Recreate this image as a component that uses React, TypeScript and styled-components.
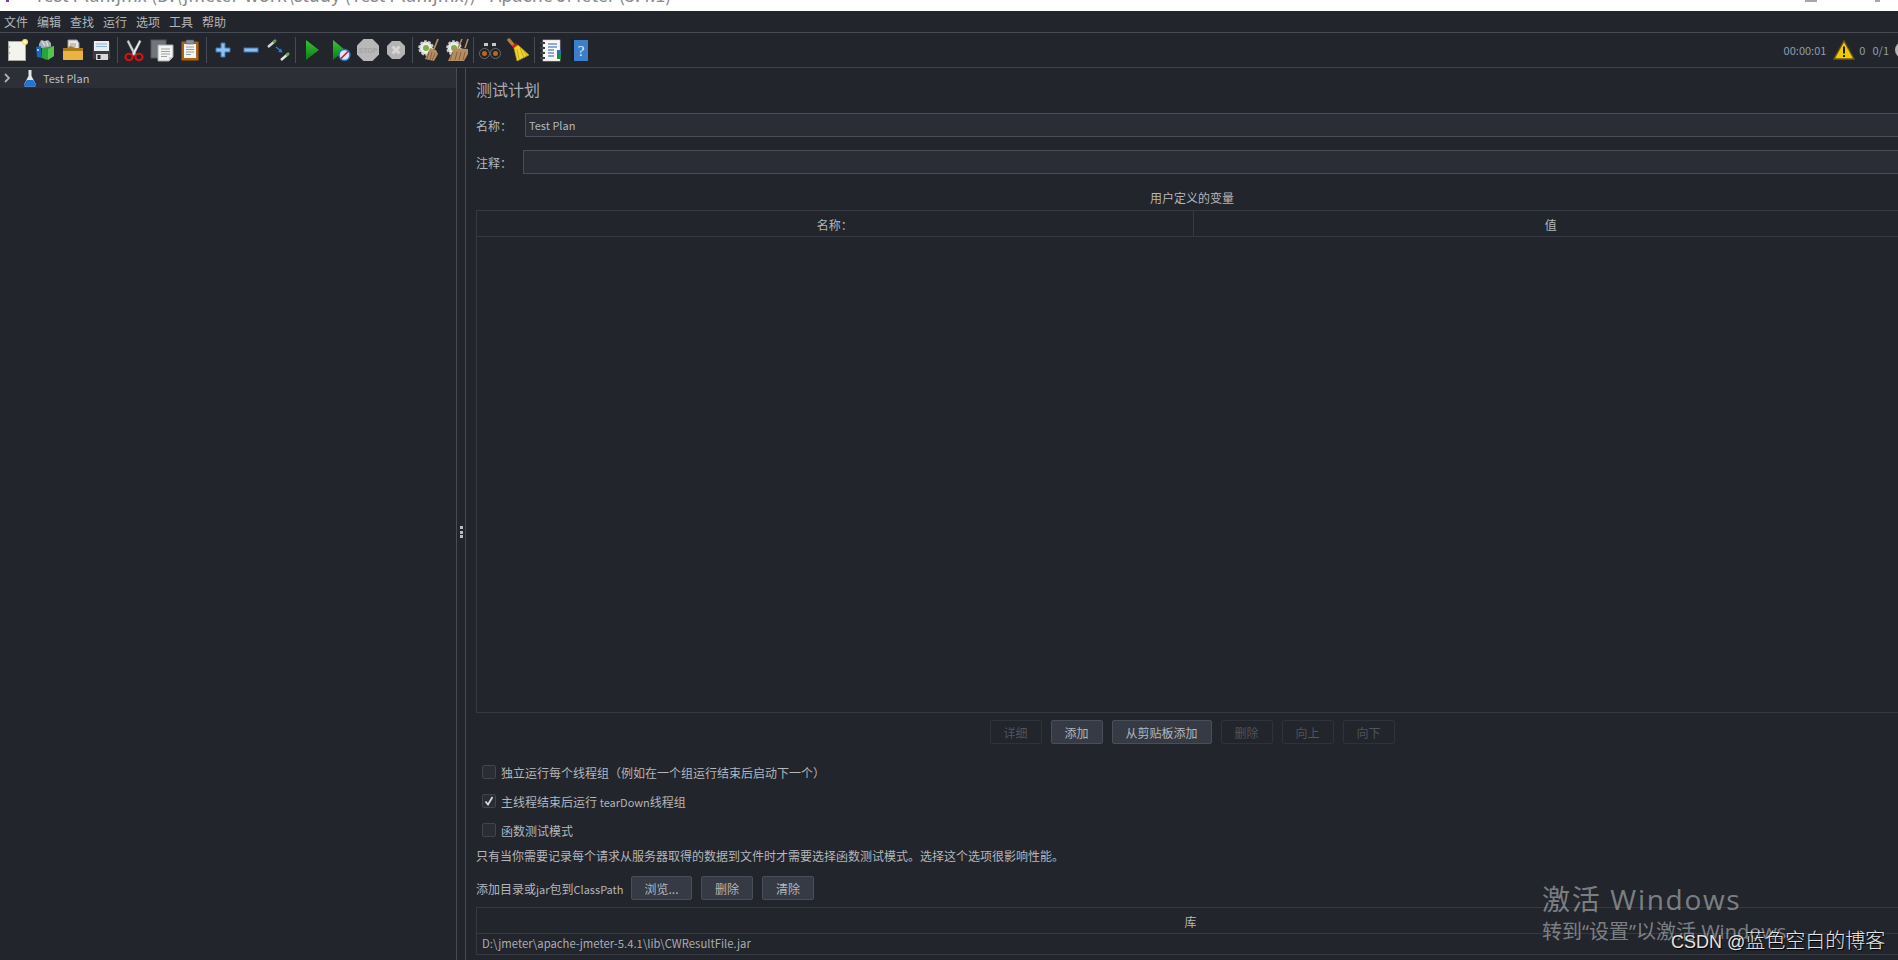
import React from "react";
import styled, { createGlobalStyle } from "styled-components";

const GlobalStyle = createGlobalStyle`
  html, body {
    margin: 0;
    padding: 0;
    background: #22252c;
  }
  * {
    box-sizing: border-box;
  }
`;

const Window = styled.div`
  width: 1898px;
  height: 960px;
  position: relative;
  overflow: hidden;
  display: flex;
  flex-direction: column;
  background: #22252c;
  color: #b3b6bb;
  font: 12px "Noto Sans CJK SC", "Noto Sans", sans-serif;
`;

const Latin = styled.span`
  font-size: 11px;
`;

const TitleBar = styled.div`
  flex: none;
  height: 11px;
  overflow: hidden;
  background: #fff;
  display: flex;
  align-items: flex-start;
  padding-left: 6px;
`;

const TitleMark = styled.span`
  width: 3px;
  height: 2px;
  background: #7a3fa0;
  margin-right: 25px;
`;

const TitleText = styled.span`
  margin-top: -17px;
  font-size: 18.15px;
  line-height: 22px;
  color: #8a8a8a;
  white-space: nowrap;
`;

const TitleControls = styled.div`
  margin-left: auto;
  display: flex;
  align-items: flex-start;
  gap: 58px;
  padding-right: 18px;
`;

const ControlMark = styled.span<{ $w: number }>`
  width: ${p => p.$w}px;
  height: 2px;
  background: #a8a8a8;
`;

const MenuBar = styled.div`
  flex: none;
  height: 22px;
  display: flex;
  align-items: center;
  gap: 9px;
  padding: 0 0 1px 4px;
  border-bottom: 1px solid #484b53;
`;

const Toolbar = styled.div`
  flex: none;
  height: 35px;
  display: flex;
  align-items: center;
  padding-left: 3px;
  border-bottom: 1px solid #3f424a;
`;

const ToolButton = styled.div`
  flex: none;
  width: 28px;
  height: 28px;
  display: flex;
  align-items: center;
  justify-content: center;
  svg {
    display: block;
  }
`;

const ToolSeparator = styled.div`
  flex: none;
  width: 5px;
  height: 26px;
  display: flex;
  justify-content: center;
  &::before {
    content: "";
    width: 1px;
    background: #484b53;
  }
`;

const Status = styled.div`
  margin-left: auto;
  display: flex;
  align-items: center;
  color: #8f9db0;
  font-size: 11px;
  margin-right: -13px;
`;

const StatusWarning = styled.span`
  display: flex;
  margin: 0 4px 0 7px;
`;

const StatusCount = styled.span`
  margin-right: 7px;
`;

const StatusCircle = styled.span`
  width: 16px;
  height: 16px;
  border-radius: 50%;
  background: #b5b5b5;
  margin-left: 6px;
`;

const Split = styled.div`
  flex: 1;
  min-height: 0;
  display: flex;
`;

const TreePanel = styled.div`
  flex: none;
  width: 457px;
  border-right: 1px solid #484b53;
`;

const TreeRow = styled.div`
  height: 20px;
  display: flex;
  align-items: center;
  padding-left: 4px;
  background: #2c2f38;
  color: #b9bcc2;
  font-size: 11px;
`;

const TreeChevron = styled.svg`
  margin-right: 13px;
`;

const TreeIcon = styled.svg`
  margin-right: 6px;
`;

const Divider = styled.div`
  flex: none;
  width: 8px;
  display: flex;
  flex-direction: column;
  align-items: center;
  justify-content: center;
  gap: 1.5px;
  padding-top: 36px;
`;

const GripDot = styled.span`
  width: 3px;
  height: 3px;
  background: #b8bcc4;
`;

const Pane = styled.div`
  flex: none;
  width: 1443px;
  padding: 11px 0 0 10px;
  border-left: 1px solid #484b53;
`;

const PaneTitle = styled.div`
  height: 20px;
  line-height: 20px;
  font-size: 16px;
  color: #a9acb2;
`;

const FieldRow = styled.div<{ $top: number }>`
  display: flex;
  align-items: center;
  height: 24px;
  margin-top: ${p => p.$top}px;
`;

const FieldLabel = styled.label<{ $width: number }>`
  flex: none;
  width: ${p => p.$width}px;
`;

const TextField = styled.input`
  flex: 1;
  height: 24px;
  padding: 0 3px;
  background: #2a2d35;
  border: 1px solid #4a4d56;
  color: #b3b6bb;
  font: inherit;
  font-size: 11px;
  outline: none;
`;

const SectionTitle = styled.div`
  height: 20px;
  line-height: 20px;
  margin-top: 14px;
  text-align: center;
`;

const TableBox = styled.div<{ $top: number; $width: number }>`
  width: ${p => p.$width}px;
  margin-top: ${p => p.$top}px;
  border: 1px solid #363942;
  border-right: none;
`;

const TableHead = styled.div<{ $columns: number }>`
  height: 26px;
  display: grid;
  grid-template-columns: repeat(${p => p.$columns}, 1fr);
  border-bottom: 1px solid #363942;
`;

const HeadCell = styled.div`
  display: flex;
  align-items: center;
  justify-content: center;
  padding-top: 1px;
  & + & {
    border-left: 1px solid #363942;
  }
`;

const TableBody = styled.div`
  height: 475px;
`;

const TableRow = styled.div`
  height: 20px;
  line-height: 19px;
  padding-left: 5px;
  font-size: 11.3px;
  color: #a9acb2;
`;

const ButtonRow = styled.div`
  display: flex;
  justify-content: center;
  gap: 9px;
  margin-top: 7px;
`;

const Button = styled.button<{ $width: number }>`
  width: ${p => p.$width}px;
  height: 24px;
  padding: 0;
  border-radius: 2px;
  border: 1px solid ${p => (p.disabled ? "#2f323a" : "#4a4e58")};
  background: ${p => (p.disabled ? "transparent" : "#363a44")};
  color: ${p => (p.disabled ? "#50545d" : "#b3b6bb")};
  font: inherit;
`;

const Options = styled.div`
  display: flex;
  flex-direction: column;
  gap: 15px;
  margin-top: 21px;
  padding-left: 6px;
`;

const Option = styled.div`
  height: 14px;
  display: flex;
  align-items: center;
  gap: 5px;
`;

const CheckBox = styled.span`
  flex: none;
  width: 14px;
  height: 14px;
  border: 1px solid #41454e;
  border-radius: 2px;
  background: #2a2d35;
  display: flex;
  align-items: center;
  justify-content: center;
`;

const Hint = styled.div`
  height: 18px;
  line-height: 18px;
  margin-top: 10px;
`;

const ClassPathRow = styled.div`
  display: flex;
  align-items: center;
  gap: 9px;
  margin-top: 11px;
`;

const ClassPathLabel = styled.span`
  width: 146px;
  white-space: nowrap;
`;

const Activation = styled.div`
  position: absolute;
  left: 1542px;
  top: 880px;
  color: rgba(255, 255, 255, 0.42);
  font-family: "Open Sans", "Noto Sans CJK SC", sans-serif;
  white-space: nowrap;
`;

const ActivationTitle = styled.div`
  font-size: 28px;
  line-height: 38px;
  letter-spacing: 1.7px;
`;

const ActivationText = styled.div`
  font-size: 20px;
  line-height: 28px;
`;

const Credit = styled.div`
  position: absolute;
  left: 1671px;
  top: 926px;
  font-family: "Liberation Sans", "Noto Sans CJK SC", sans-serif;
  font-size: 18px;
  line-height: 28px;
  color: #e4e4e4;
  text-shadow: 1px 1px 1px #000;
  white-space: nowrap;
  span {
    font-family: "Noto Sans CJK SC", sans-serif;
    font-size: 20px;
    font-weight: 300;
  }
`;

const Icon: React.FC<{ children: React.ReactNode }> = ({ children }) => (
  <svg width="24" height="24" viewBox="0 0 24 24">
    {children}
  </svg>
);

const NewIcon = () => (
  <Icon>
    <rect x="3.5" y="3.5" width="17" height="19" fill="#f4f4ee" stroke="#a9a9a2" />
    <circle cx="4.5" cy="9" r="0.8" fill="#999" />
    <circle cx="4.5" cy="15" r="0.8" fill="#999" />
    <circle cx="20" cy="4" r="3" fill="#f6e27a" />
    <circle cx="20" cy="4" r="1.4" fill="#fffbe0" />
  </Icon>
);

const TemplatesIcon = () => (
  <Icon>
    <path d="M6 6l2-4 4 1 3-1 3 3v5H6z" fill="#a9adb0" />
    <path d="M9 3l3 5M13 3l2 5" stroke="#e4e6e8" strokeWidth="1.2" />
    <path d="M3 9l5-1 1 12-5-1z" fill="#1668b8" />
    <path d="M5 11v2" stroke="#dfe9f3" strokeWidth="1.4" />
    <path d="M9 10l12-2v10l-7 4-5-2z" fill="#2aa33a" />
    <path d="M15 11l6-3v10l-6 4z" fill="#55c550" />
  </Icon>
);

const OpenIcon = () => (
  <Icon>
    <path d="M7 2h9l2 3v8H7z" fill="#e8e8e8" stroke="#999" />
    <path d="M9 6h6M9 8h6" stroke="#9a9a9a" />
    <path d="M2 10h5l2-2 6 2h7v11a1 1 0 0 1-1 1H3a1 1 0 0 1-1-1z" fill="#a97a16" />
    <path d="M2 13h20v8a1 1 0 0 1-1 1H3a1 1 0 0 1-1-1z" fill="#eab343" />
  </Icon>
);

const SaveIcon = () => (
  <Icon>
    <path d="M3 3h17l2 2v17H3z" fill="#3b3d42" stroke="#1d1e21" />
    <rect x="5" y="3" width="15" height="10" fill="#e6edf3" />
    <path d="M7 6h11M7 8.500h11" stroke="#8fb3d1" />
    <rect x="7" y="16" width="12" height="6" fill="#d8d8d8" />
    <rect x="8.500" y="17" width="3" height="4" fill="#2a2b2e" />
  </Icon>
);

const CutIcon = () => (
  <Icon>
    <path d="M6.500 2l7.500 14-2 1.500L5 3.500z" fill="#d6d8da" stroke="#8b8e92" strokeWidth="0.5" />
    <path d="M17.500 2L10 16l2 1.500L19 3.500z" fill="#f0f1f2" stroke="#8b8e92" strokeWidth="0.5" />
    <ellipse cx="7" cy="19" rx="3.600" ry="3.200" fill="none" stroke="#cf1414" strokeWidth="2.100" />
    <ellipse cx="17" cy="19" rx="3.600" ry="3.200" fill="none" stroke="#cf1414" strokeWidth="2.100" />
  </Icon>
);

const CopyIcon = () => (
  <Icon>
    <rect x="1" y="2" width="15" height="18" fill="#72757a" stroke="#55585c" />
    <path d="M8 7h15v12l-4 4H8z" fill="#f4f4f4" stroke="#a7a7a7" />
    <path d="M11 11h9M11 13.500h9M11 16h9M11 18.500h6" stroke="#a0a0a0" />
    <path d="M19 23v-4h4z" fill="#cfcfcf" />
  </Icon>
);

const PasteIcon = () => (
  <Icon>
    <rect x="3.500" y="3.500" width="17" height="19" rx="1" fill="#a8651a" stroke="#6f4310" />
    <path d="M6 6h12v14H6z" fill="#f3f3f1" />
    <rect x="8" y="2" width="8" height="4" rx="1" fill="#8c8f93" stroke="#55585c" strokeWidth="0.6" />
    <path d="M8 9h8M8 11.500h8M8 14h8M8 16.500h5" stroke="#9c9c9c" />
  </Icon>
);

const PlusIcon = () => (
  <Icon>
    <path d="M10 5h4v5h5v4h-5v5h-4v-5H5v-4h5z" fill="#8fc0ec" stroke="#3a79b6" />
  </Icon>
);

const MinusIcon = () => (
  <Icon>
    <rect x="5" y="10" width="14" height="4" fill="#8fc0ec" stroke="#3a79b6" />
  </Icon>
);

const ToggleIcon = () => (
  <Icon>
    <path d="M1 9l7-6" stroke="#d8d8d8" strokeWidth="2.400" />
    <path d="M6 4.500l3-2.500" stroke="#5f9f4a" strokeWidth="2.600" />
    <path d="M14 22l7-6" stroke="#e4e4e4" strokeWidth="2.400" />
    <path d="M19 17.500l3-2.500" stroke="#6cae50" strokeWidth="2.600" />
    <path d="M9 9l5 4" stroke="#2a7de0" strokeWidth="1.500" />
    <path d="M15.500 14.500l-4.500-.5 3-3.500z" fill="#2a7de0" />
  </Icon>
);

const StartIcon = () => (
  <Icon>
    <defs>
      <linearGradient id="play" x1="0" y1="0" x2="0" y2="1">
        <stop offset="0" stopColor="#38c338" />
        <stop offset="1" stopColor="#0b7d16" />
      </linearGradient>
    </defs>
    <path d="M6 2l13 10L6 22z" fill="url(#play)" />
  </Icon>
);

const StartNoTimerIcon = () => (
  <Icon>
    <path d="M5 2l12 10L5 22z" fill="url(#play)" />
    <circle cx="16.500" cy="17" r="5.500" fill="#d7e8f8" stroke="#2b6cc0" strokeWidth="1.400" />
    <path d="M13 20.500l7-7" stroke="#d81818" strokeWidth="1.600" />
  </Icon>
);

const StopIcon = () => (
  <Icon>
    <path d="M7.500 1h9L23 7.500v9L16.500 23h-9L1 16.500v-9z" fill="#b8b8b8" />
    <text x="12" y="14.500" textAnchor="middle" fontSize="7" fontWeight="700" fill="#a4a4a4" fontFamily="Liberation Sans, sans-serif">
      STOP
    </text>
  </Icon>
);

const ShutdownIcon = () => (
  <Icon>
    <path d="M8 3h8l5 5v8l-5 5H8l-5-5V8z" fill="#b4b4b4" />
    <path d="M8.500 8.500l7 7M15.500 8.500l-7 7" stroke="#d6d6d6" strokeWidth="3" />
  </Icon>
);

const Gear = () => (
  <>
    <circle cx="9" cy="10" r="6.500" fill="#ececec" stroke="#d0d0d0" strokeWidth="2.500" strokeDasharray="2.500 1.500" />
    <circle cx="9" cy="10" r="3" fill="#7cb142" />
  </>
);

const ClearIcon = () => (
  <Icon>
    <Gear />
    <path d="M21 1l-4 10" stroke="#b58b5e" strokeWidth="1.800" />
    <path d="M13 10l6 2 2 4-4 7-9-2z" fill="#b48d64" />
    <path d="M12 14l-2 7M15 14l-2 8M18 15l-3 8" stroke="#86633f" />
  </Icon>
);

const ClearAllIcon = () => (
  <Icon>
    <Gear />
    <path d="M17 1l-4 9M23 1l-3 9" stroke="#b58b5e" strokeWidth="1.600" />
    <path d="M9 10l14 1 0 5-4 7H3z" fill="#b48d64" />
    <path d="M8 14l-3 8M12 14l-2 8M16 14l-2 8M20 14l-2 8" stroke="#86633f" />
  </Icon>
);

const SearchIcon = () => (
  <Icon>
    <path d="M7 7h3v4h4V7h3l5 8H2z" fill="#2a2a2a" />
    <circle cx="6.500" cy="15.500" r="5" fill="#222" stroke="#6b6b6b" />
    <circle cx="17.500" cy="15.500" r="5" fill="#222" stroke="#6b6b6b" />
    <circle cx="6.500" cy="15.500" r="2.500" fill="#b5682c" />
    <circle cx="17.500" cy="15.500" r="2.500" fill="#b5682c" />
    <rect x="6" y="5" width="4" height="3" fill="#c9c9c9" />
    <rect x="14" y="5" width="4" height="3" fill="#c9c9c9" />
  </Icon>
);

const BroomIcon = () => (
  <Icon>
    <path d="M3 2l6 7" stroke="#b8803c" strokeWidth="3.400" strokeLinecap="round" />
    <path d="M6 8l4-3 2 3-4 3z" fill="#d81a1a" />
    <path d="M8 10l4-3 11 10-12 6z" fill="#f2d62e" stroke="#b59a12" strokeWidth="0.700" />
    <path d="M11 11l2 10M14 10l4 10M17 12l4 6" stroke="#c8a718" />
  </Icon>
);

const FunctionIcon = () => (
  <Icon>
    <rect x="4" y="2" width="17" height="21" fill="#f8f8f8" stroke="#c8c8c8" strokeWidth="0.600" />
    <path d="M1 5h5M1 10h5M1 15h5M1 20h5" stroke="#3d3f44" strokeWidth="1.800" />
    <path d="M9 6h9M9 9h9M9 12h6M9 15h6M9 18h6" stroke="#2a5db0" />
    <rect x="18" y="12" width="4" height="4" fill="#2f6fc0" />
    <rect x="18" y="16" width="4" height="5" fill="#1e8f3c" />
  </Icon>
);

const HelpIcon = () => (
  <Icon>
    <rect x="4" y="1" width="4" height="22" fill="#15202f" />
    <rect x="7" y="2" width="14" height="21" fill="#3d7ec9" />
    <text x="14" y="18" textAnchor="middle" fontSize="15" fill="#e6f0fb" fontFamily="Liberation Serif, serif">
      ?
    </text>
  </Icon>
);

const WarningIcon = () => (
  <svg width="22" height="20" viewBox="0 0 22 20">
    <path d="M11 1l10 18H1z" fill="#f4c800" stroke="#6d5a08" strokeWidth="1.300" />
    <rect x="10" y="6.500" width="2" height="7" fill="#1b1b1b" />
    <rect x="10" y="15" width="2" height="2" fill="#1b1b1b" />
  </svg>
);

const menus = ["文件", "编辑", "查找", "运行", "选项", "工具", "帮助"];

const toolGroups = [
  [NewIcon, TemplatesIcon, OpenIcon, SaveIcon],
  [CutIcon, CopyIcon, PasteIcon],
  [PlusIcon, MinusIcon, ToggleIcon],
  [StartIcon, StartNoTimerIcon, StopIcon, ShutdownIcon],
  [ClearIcon, ClearAllIcon],
  [SearchIcon, BroomIcon],
  [FunctionIcon, HelpIcon],
];

const tableButtons = [
  { label: "详细", width: 52, disabled: true },
  { label: "添加", width: 52, disabled: false },
  { label: "从剪贴板添加", width: 100, disabled: false },
  { label: "删除", width: 52, disabled: true },
  { label: "向上", width: 52, disabled: true },
  { label: "向下", width: 52, disabled: true },
];

const options = [
  { id: "serialize", label: <>独立运行每个线程组（例如在一个组运行结束后启动下一个）</>, checked: false },
  { id: "teardown", label: <>主线程结束后运行 <Latin>tearDown</Latin>线程组</>, checked: true },
  { id: "functional", label: <>函数测试模式</>, checked: false },
];

const App: React.FC = () => {
  return (
    <Window>
      <GlobalStyle />
      <TitleBar>
        <TitleMark />
        <TitleText>Test Plan.jmx (D:\jmeter-work\study (Test Plan.jmx)) - Apache JMeter (5.4.1)</TitleText>
        <TitleControls>
          <ControlMark $w={12} />
          <ControlMark $w={5} />
        </TitleControls>
      </TitleBar>

      <MenuBar>
        {menus.map(m => (
          <span key={m}>{m}</span>
        ))}
      </MenuBar>

      <Toolbar>
        {toolGroups.map((group, i) => (
          <React.Fragment key={i}>
            {i > 0 && <ToolSeparator />}
            {group.map((Tool, j) => (
              <ToolButton key={j}>
                <Tool />
              </ToolButton>
            ))}
          </React.Fragment>
        ))}
        <Status>
          <span>00:00:01</span>
          <StatusWarning>
            <WarningIcon />
          </StatusWarning>
          <StatusCount>0</StatusCount>
          <span>0/1</span>
          <StatusCircle />
        </Status>
      </Toolbar>

      <Split>
        <TreePanel>
          <TreeRow>
            <TreeChevron width="6" height="10" viewBox="0 0 6 10">
              <path d="M1 1l4 4-4 4" fill="none" stroke="#aab0b8" strokeWidth="1.800" />
            </TreeChevron>
            <TreeIcon width="14" height="18" viewBox="0 0 14 18">
              <path d="M5.500 1h3v6l4.500 8.500a1.500 1.500 0 0 1-1.300 2H2.300a1.500 1.500 0 0 1-1.300-2L5.500 7z" fill="#dfe6ee" />
              <path d="M3.800 11h6.400l2.800 4.500a1.500 1.500 0 0 1-1.300 2H2.300a1.500 1.500 0 0 1-1.300-2z" fill="#1f72d6" />
            </TreeIcon>
            <span>Test Plan</span>
          </TreeRow>
        </TreePanel>

        <Divider>
          <GripDot />
          <GripDot />
          <GripDot />
        </Divider>

        <Pane>
          <PaneTitle>测试计划</PaneTitle>
          <FieldRow $top={14}>
            <FieldLabel $width={49}>名称：</FieldLabel>
            <TextField defaultValue="Test Plan" readOnly />
          </FieldRow>
          <FieldRow $top={13}>
            <FieldLabel $width={47}>注释：</FieldLabel>
            <TextField readOnly />
          </FieldRow>

          <SectionTitle>用户定义的变量</SectionTitle>
          <TableBox $top={2} $width={1432}>
            <TableHead $columns={2}>
              <HeadCell>名称：</HeadCell>
              <HeadCell>值</HeadCell>
            </TableHead>
            <TableBody />
          </TableBox>

          <ButtonRow>
            {tableButtons.map(b => (
              <Button key={b.label} $width={b.width} disabled={b.disabled}>
                {b.label}
              </Button>
            ))}
          </ButtonRow>

          <Options>
            {options.map(o => (
              <Option key={o.id}>
                <CheckBox>
                  {o.checked && (
                    <svg width="10" height="10" viewBox="0 0 10 10">
                      <path d="M1.500 5.500L4 8.500 8.500 1" fill="none" stroke="#d8dade" strokeWidth="1.800" />
                    </svg>
                  )}
                </CheckBox>
                <span>{o.label}</span>
              </Option>
            ))}
          </Options>

          <Hint>只有当你需要记录每个请求从服务器取得的数据到文件时才需要选择函数测试模式。选择这个选项很影响性能。</Hint>

          <ClassPathRow>
            <ClassPathLabel>
              添加目录或<Latin>jar</Latin>包到<Latin>ClassPath</Latin>
            </ClassPathLabel>
            <Button $width={61}>浏览...</Button>
            <Button $width={52}>删除</Button>
            <Button $width={52}>清除</Button>
          </ClassPathRow>

          <TableBox $top={7} $width={1428}>
            <TableHead $columns={1}>
              <HeadCell>库</HeadCell>
            </TableHead>
            <TableRow>D:\jmeter\apache-jmeter-5.4.1\lib\CWResultFile.jar</TableRow>
          </TableBox>
        </Pane>
      </Split>

      <Activation>
        <ActivationTitle>激活 Windows</ActivationTitle>
        <ActivationText>转到“设置”以激活 Windows。</ActivationText>
      </Activation>
      <Credit>
        CSDN @<span>蓝色空白的博客</span>
      </Credit>
    </Window>
  );
};

export default App;
